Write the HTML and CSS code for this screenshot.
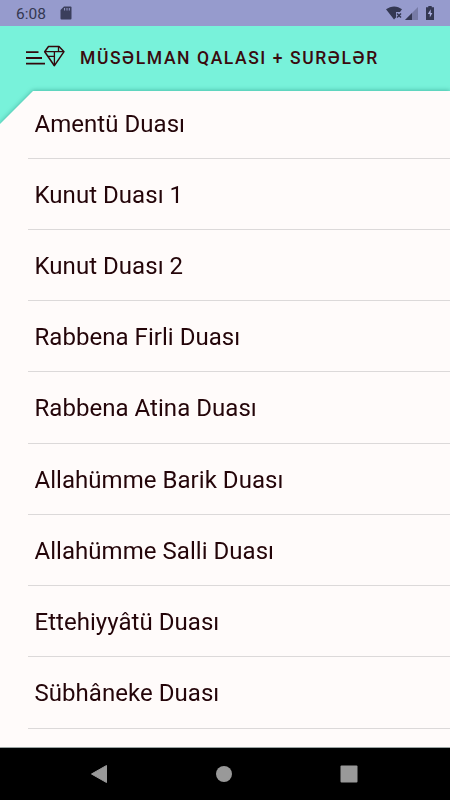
FILE: index.html
```html
<!DOCTYPE html>
<html lang="az">
<head>
    <meta charset="UTF-8">
    <meta name="viewport" content="width=device-width, initial-scale=1.0">
    <title>Müsəlman Qalası + Surələr</title>
    <link rel="stylesheet" href="styles.css">
</head>
<body>
    <div class="status-bar">
        <span class="clock">6:08</span>
        <svg class="sd-card" width="12" height="14" viewBox="0 0 12 14">
            <path d="M4 .5h6.5a1 1 0 0 1 1 1v11a1 1 0 0 1-1 1h-9a1 1 0 0 1-1-1V4z" fill="#3b3f5c"/>
            <path d="M4.6 2v2.500M7 2v2.500M9.300 2v2.500" stroke="#969bcd" stroke-width="1"/>
        </svg>
        <div class="status-icons">
            <svg width="18" height="15" viewBox="0 0 18 15">
                <path d="M0 3.300C5-.6 11.500-.6 16 3.300L14 6H10v5.500L8 13.500z" fill="#343852"/>
                <path d="M11 7.500l4 4M15 7.500l-4 4" stroke="#343852" stroke-width="1.500"/>
            </svg>
            <svg class="signal" width="13" height="13" viewBox="0 0 13 13">
                <path d="M13 0v13H0z" fill="#777ba6"/>
                <path d="M7 6v7H0z" fill="#343852"/>
            </svg>
            <svg class="battery" width="8" height="14" viewBox="0 0 8 14">
                <path d="M2.300 0h3.400v1.300H8V14H0V1.300h2.300z" fill="#343852"/>
                <path d="M4.700 3.300L1.800 8h2v3.500L6.400 7H4.700z" fill="#a9adde"/>
            </svg>
        </div>
    </div>

    <header class="app-bar">
        <svg class="menu-icon" width="40" height="24" viewBox="0 0 40 24" fill="none" stroke="#33080c">
            <path d="M0 7.200h12.500M0 13h16M0 18.600h19" stroke-width="1.800"/>
            <path d="M22.500 1.500h10.500l5 5.200L28.400 20.700 18.700 6.700z" stroke-width="1.500" stroke-linejoin="round"/>
            <path d="M18.700 6.700H38M28.400 6.700v14M32.500 1.500v5M22 11.400h6.400" stroke-width="1.300"/>
        </svg>
        <h1>MÜSƏLMAN QALASI + SURƏLƏR</h1>
    </header>

    <main class="sheet">
        <ul class="dua-list">
            <li>Amentü Duası</li>
            <li>Kunut Duası 1</li>
            <li>Kunut Duası 2</li>
            <li>Rabbena Firli Duası</li>
            <li>Rabbena Atina Duası</li>
            <li>Allahümme Barik Duası</li>
            <li>Allahümme Salli Duası</li>
            <li>Ettehiyyâtü Duası</li>
            <li>Sübhâneke Duası</li>
        </ul>
    </main>

    <nav class="nav-bar">
        <svg width="18" height="20" viewBox="0 0 18 20"><path d="M16.500 1.500v17L1.500 10z" fill="#999" stroke="#999" stroke-linejoin="round"/></svg>
        <svg width="18" height="18" viewBox="0 0 18 18"><circle cx="9" cy="9" r="8" fill="#999"/></svg>
        <svg width="18" height="18" viewBox="0 0 18 18"><rect x=".5" y=".5" width="17" height="17" rx="1" fill="#999"/></svg>
    </nav>
</body>
</html>
```

FILE: styles.css
```css
:root {
    --status-color: #969bcd;
    --primary-color: #78f2da;
    --surface-color: #fffbfa;
    --text-color: #240509;
}

* {
    margin: 0;
    padding: 0;
    box-sizing: border-box;
    font-family: Roboto, Arial, sans-serif;
}

body {
    display: flex;
    flex-direction: column;
    height: 100vh;
    overflow: hidden;
    background: var(--primary-color);
    color: var(--text-color);
}

.status-bar {
    display: flex;
    align-items: center;
    height: 26px;
    padding: 0 16px;
    background: var(--status-color);
    color: #343852;
}

.clock {
    font-size: 15.5px;
    line-height: 26px;
    padding-top: 1px;
}

.sd-card {
    margin-left: 14px;
}

.status-icons {
    display: flex;
    align-items: center;
    margin-left: auto;
}

.signal {
    margin-left: 1px;
}

.battery {
    margin-left: 8px;
}

.app-bar {
    display: flex;
    align-items: center;
    height: 65px;
    padding: 0 26px;
}

.menu-icon {
    margin-top: -4px;
}

.app-bar h1 {
    margin-top: -2px;
    margin-left: 14px;
    font-size: 17.5px;
    font-weight: 500;
    letter-spacing: 1.58px;
    line-height: 24px;
    white-space: nowrap;
    color: #3a0a0e;
}

.sheet {
    flex: 1;
    min-height: 0;
    filter: drop-shadow(0 -1px 2px rgba(0, 100, 85, 0.35));
}

/* обрезанный левый верхний угол */
.dua-list {
    height: 100%;
    padding-left: 28px;
    list-style: none;
    background: var(--surface-color);
    clip-path: polygon(33px 0, 100% 0, 100% 100%, 0 100%, 0 33px);
}

.dua-list li {
    height: 71.25px;
    padding-left: 6.5px;
    border-bottom: 1px solid #dcd9d9;
    font-size: 24px;
    line-height: 73px;
    letter-spacing: 0.04px;
}

.dua-list li:first-child {
    height: 67.6px;
    line-height: 66px;
}

.nav-bar {
    display: flex;
    align-items: center;
    justify-content: space-between;
    height: 53px;
    padding: 0 92px 0 90px;
    border-top: 1px solid #aaa;
    background: #000;
}
```
